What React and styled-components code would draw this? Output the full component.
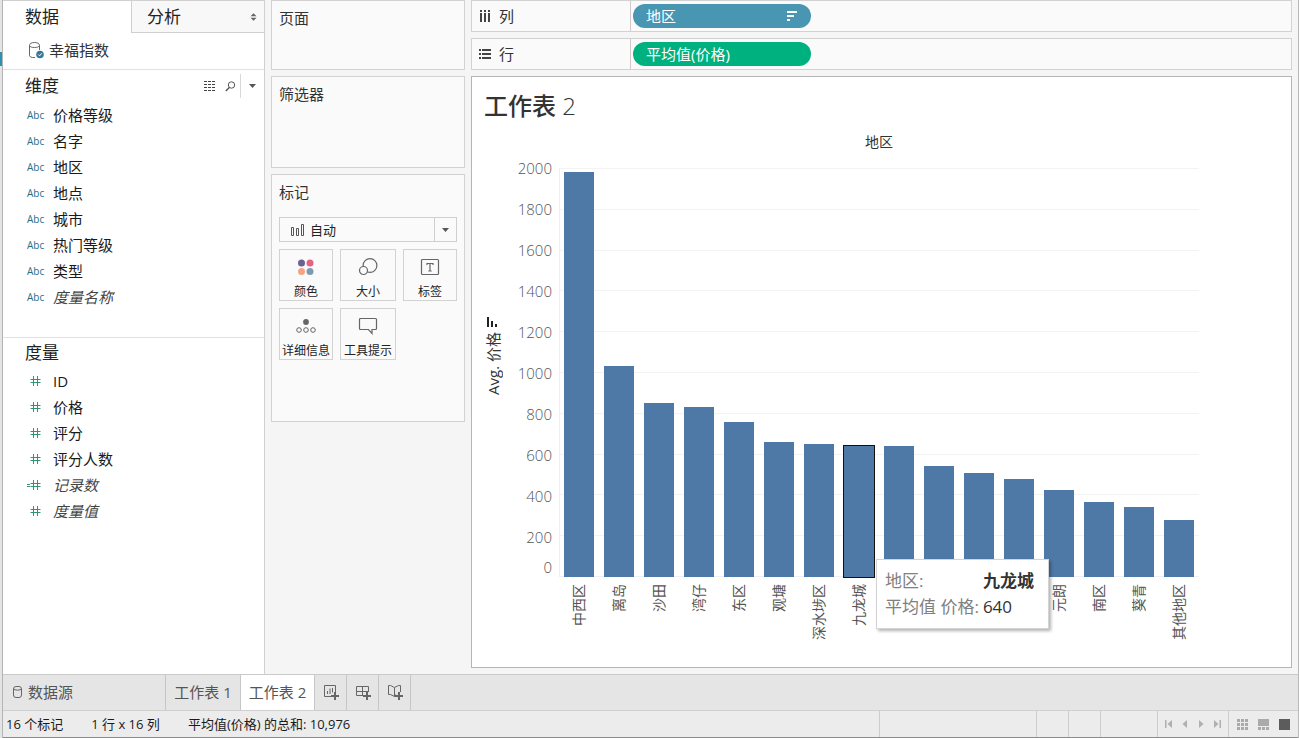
import React from "react";
import styled, { createGlobalStyle } from "styled-components";

const GlobalStyle = createGlobalStyle`
  *, *::before, *::after { box-sizing: border-box; }
  body {
    margin: 0;
    background: #f5f5f5;
    color: #222;
    font: 400 15px/20px "Open Sans", "Noto Sans CJK SC", sans-serif;
  }
  button, select { font: inherit; color: inherit; margin: 0; padding: 0; }
  h2, h1, ul, dl, dd, dt { margin: 0; padding: 0; font-weight: 400; }
  ul { list-style: none; }
  svg { display: block; flex: none; }
`;

const Window = styled.div`
  display: grid;
  grid-template-rows: 1fr auto auto;
  grid-template-columns: 3px 1fr;
  min-height: 100vh;
  border-right: 1px solid #b9b9b9;
`;
const Edge = styled.div`
  grid-row: 1 / 4;
  background: #e4e4e4;
  border-right: 1px solid #b4b4b4;
  padding-top: 52px;
  &::before { content: ""; display: block; height: 14px; background: #2b93ad; }
`;
const Workspace = styled.main`
  display: grid;
  grid-template-columns: 262px 194px 1fr;
  column-gap: 6px;
  padding-right: 6px;
`;

/* Data pane */
const DataPane = styled.aside`
  background: #fff;
  border-right: 1px solid #d0d0d0;
`;
const PaneTabs = styled.div`
  display: grid;
  grid-template-columns: 128px 1fr;
  height: 33px;
  border-top: 1px solid #d0d0d0;
`;
const PaneTab = styled.button`
  display: flex;
  align-items: center;
  justify-content: space-between;
  border: 0;
  padding: 0 7px 0 ${(p) => (p.$active ? 22 : 15)}px;
  font-size: 17px;
  background: ${(p) => (p.$active ? "#fff" : "#f8f8f8")};
  border-left: ${(p) => (p.$active ? 0 : "1px solid #d0d0d0")};
  border-bottom: ${(p) => (p.$active ? 0 : "1px solid #d0d0d0")};
`;
const Source = styled.div`
  display: flex;
  align-items: center;
  gap: 4px;
  height: 37px;
  padding: 0 0 2px 23px;
  color: #333;
  border-bottom: 1px solid #e2e2e2;
`;
const Section = styled.section`
  padding-bottom: 27px;
  border-bottom: ${(p) => (p.$last ? 0 : "1px solid #e2e2e2")};
`;
const SectionHead = styled.header`
  display: flex;
  align-items: center;
  height: ${(p) => (p.$tall ? 32 : 30)}px;
  padding-left: 22px;
`;
const SectionTitle = styled.h2`
  flex: 1;
  font-size: 17px;
`;
const Tool = styled.button`
  display: grid;
  place-items: center;
  height: 24px;
  width: ${(p) => p.$w}px;
  border: 0;
  border-left: ${(p) => (p.$divided ? "1px solid #d8d8d8" : 0)};
  background: none;
`;
const Field = styled.li`
  display: grid;
  grid-template-columns: 26px 1fr;
  align-items: center;
  height: 26px;
  padding-left: 24px;
  color: ${(p) => (p.$italic ? "#444" : "#1a1a1a")};
  font-style: ${(p) => (p.$italic ? "italic" : "normal")};
`;
const Abc = styled.span`
  font: 500 10px/20px "Open Sans", sans-serif;
  color: #22708a;
`;

/* Cards */
const Cards = styled.div`
  display: flex;
  flex-direction: column;
  gap: 6px;
`;
const Card = styled.section`
  height: ${(p) => p.$h}px;
  padding: 7px;
  background: #fafafa;
  border: 1px solid #d2d2d2;
`;
const CardTitle = styled.h2`
  font-size: 15px;
  line-height: 20px;
  color: #333;
`;
const MarkType = styled.label`
  display: grid;
  grid-template-columns: 30px 1fr 22px;
  align-items: center;
  height: 25px;
  margin: 15px 0 7px;
  border: 1px solid #cfcfcf;
  > * { grid-row: 1; }
  > svg { grid-column: 1; justify-self: end; margin-right: 5px; }
`;
const MarkSelect = styled.select`
  grid-column: 1 / 4;
  width: 100%;
  height: 23px;
  padding-left: 30px;
  border: 0;
  background: none;
  appearance: none;
  font-size: 13px;
`;
const SelectArrow = styled.span`
  grid-column: 3;
  display: grid;
  place-items: center;
  height: 23px;
  border-left: 1px solid #cfcfcf;
  pointer-events: none;
`;
const MarkGrid = styled.div`
  display: grid;
  grid-template-columns: 54px 56px 54px;
  gap: 7px;
`;
const MarkButton = styled.button`
  display: flex;
  flex-direction: column;
  align-items: center;
  justify-content: space-between;
  height: 52px;
  padding: 7px 0 0;
  border: 1px solid #d2d2d2;
  background: #fafafa;
  font-size: 12px;
  line-height: 16px;
  white-space: nowrap;
`;

/* Shelves */
const Right = styled.div`
  display: flex;
  flex-direction: column;
  gap: 6px;
  min-width: 0;
  padding-bottom: 6px;
`;
const Shelf = styled.div`
  display: flex;
  align-items: center;
  height: 32px;
  background: #fafafa;
  border: 1px solid #d2d2d2;
`;
const ShelfLabel = styled.div`
  display: flex;
  align-items: center;
  gap: 8px;
  align-self: stretch;
  width: 159px;
  padding-left: 7px;
  margin-right: 2px;
  border-right: 1px solid #d2c8c8;
  color: #333;
`;
const Pill = styled.button`
  display: flex;
  align-items: center;
  justify-content: space-between;
  width: 178px;
  height: 24px;
  padding: 0 13px;
  border: 0;
  border-radius: 12px;
  background: ${(p) => p.$color};
  color: #fff;
`;

/* Worksheet */
const Sheet = styled.section`
  flex: 1;
  background: #fff;
  border: 1px solid #b5b5b5;
`;
const SheetTitle = styled.h1`
  padding: 11px 12px 0;
  font-size: 24px;
  line-height: 36px;
  font-weight: 300;
  color: #333;
  b { font-weight: 500; }
`;
const Chart = styled.div`
  display: grid;
  grid-template-columns: 42px 45px 640px;
  grid-template-rows: 24px 429px auto;
`;
const ChartHeader = styled.div`
  grid-column: 3;
  align-self: end;
  text-align: center;
  font-size: 14px;
  line-height: 12px;
  color: #333;
`;
const AxisTitle = styled.div`
  grid-column: 1;
  grid-row: 2;
  display: flex;
  flex-direction: column;
  align-items: center;
  justify-content: center;
  gap: 4px;
  padding-bottom: 14px;
  color: #333;
  font-size: 15px;
  font-weight: 400;
`;
const Upward = styled.span`
  writing-mode: vertical-rl;
  text-orientation: sideways;
  transform: rotate(180deg);
  white-space: nowrap;
`;
const Ticks = styled.div`
  grid-column: 2;
  grid-row: 2;
  display: grid;
  grid-template-rows: repeat(10, 1fr) 20px;
  align-items: center;
  justify-items: end;
  padding-right: 7px;
  color: #555;
  font-weight: 300;
`;
const Plot = styled.div`
  grid-column: 3;
  grid-row: 2;
  position: relative;
  display: grid;
  padding-top: 20px;
`;
const GridLines = styled.div`
  grid-area: 1 / 1;
  display: grid;
  grid-template-rows: repeat(10, 1fr);
  border-left: 1px solid #f0f0f0;
  border-bottom: 1px solid #f0f0f0;
  > i { border-top: 1px solid #f3f3f3; }
`;
const Bars = styled.div`
  grid-area: 1 / 1;
  display: grid;
  grid-template-columns: repeat(16, 30px);
  column-gap: 10px;
  align-items: end;
  padding-left: 5px;
`;
const Bar = styled.div`
  background: #4e79a7;
  outline: ${(p) => (p.$selected ? "1px solid #111" : "none")};
`;
const Names = styled.div`
  grid-column: 3;
  display: grid;
  grid-template-columns: repeat(16, 40px);
  justify-items: center;
  align-items: start;
  padding-top: 7px;
  color: #555;
  font-size: 14px;
`;
const Tooltip = styled.dl`
  position: absolute;
  left: 317px;
  top: 411px;
  display: grid;
  grid-template-columns: auto auto;
  column-gap: 4px;
  width: 173px;
  height: 70px;
  padding: 8px;
  justify-content: start;
  background: #fff;
  border: 1px solid #d4d4d4;
  box-shadow: 2px 2px 3px rgba(0, 0, 0, 0.3);
  font-size: 17px;
  line-height: 26px;
  white-space: nowrap;
  dt { color: #808080; }
  dd { color: #333; }
  b { font-weight: 700; }
`;

/* Bottom bars */
const SheetTabs = styled.nav`
  grid-column: 2;
  display: flex;
  height: 37px;
  background: #e5e5e5;
  border-top: 1px solid #cacaca;
  border-bottom: 1px solid #cfcfcf;
`;
const SheetTab = styled.button`
  display: flex;
  align-items: center;
  justify-content: ${(p) => (p.$start ? "flex-start" : "center")};
  gap: 6px;
  width: ${(p) => p.$w}px;
  padding: 0 ${(p) => (p.$start ? 10 : 0)}px 2px;
  border: 0;
  border-right: 1px solid #c6c6c6;
  background: ${(p) => (p.$active ? "#fff" : "transparent")};
  color: #555;
`;
const Status = styled.footer`
  grid-column: 2;
  display: flex;
  align-items: center;
  height: 27px;
  padding-left: 3px;
  background: #ececec;
  border-bottom: 1px solid #8a8a8a;
  font-size: 13px;
  color: #1a1a1a;
`;
const StatusText = styled.span`
  margin-right: 28px;
`;
const StatusCell = styled.div`
  display: flex;
  align-items: center;
  justify-content: space-around;
  align-self: stretch;
  width: ${(p) => p.$w}px;
  padding: 0 3px;
  border-left: 1px solid #cdcdcd;
`;
const Spacer = styled.span`
  flex: 1;
`;
const IconButton = styled.button`
  display: grid;
  place-items: center;
  width: 16px;
  height: 18px;
  border: 0;
  background: none;
`;

const Caret = () => (
  <svg width="7" height="4" viewBox="0 0 7 4"><path d="M0 0h7L3.5 4z" fill="#555" /></svg>
);
const SortArrows = () => (
  <svg width="7" height="8" viewBox="0 0 7 8"><path d="M.5 3.3h6L3.5.2zM.5 4.7h6l-3 3.1z" fill="#666" /></svg>
);
const SourceIcon = () => (
  <svg width="19" height="18" viewBox="0 0 19 18" fill="none" stroke="#666">
    <path d="M9 16.500H6.500q-2.500 0-3-2v-10c0-2 2-3 5-3s5 1 5 3V9M3.500 4.500C4 6 6 6.500 8.500 6.500s4.500-.5 5-2" />
    <circle cx="14" cy="13.500" r="3.800" fill="#37789a" stroke="none" />
    <path d="m12.300 13.500 1.300 1.300 2.200-2.500" stroke="#fff" />
  </svg>
);
const GridIcon = () => (
  <svg width="12" height="10" viewBox="0 0 12 10" stroke="#444" strokeDasharray="3 1">
    <path d="M0 .5h12M0 3.500h12M0 6.500h12M0 9.500h12" strokeWidth="1" />
  </svg>
);
const SearchIcon = () => (
  <svg width="11" height="11" viewBox="0 0 11 11" fill="none" stroke="#555">
    <circle cx="6.500" cy="4" r="3.200" /><path d="M4.300 6.500.8 10" strokeWidth="1.400" />
  </svg>
);
const HashIcon = ({ calc }) => (
  <svg width="15" height="12" viewBox="0 0 15 12" stroke="#2f9577" fill="none">
    <path d="M6.500 1v10M10.500 1v10M3.500 4.500h10M3.500 7.500h10" />
    {calc && <path d="M0 5.500h3M0 7.500h3" />}
  </svg>
);
const BarTypeIcon = () => (
  <svg width="14" height="14" viewBox="0 0 14 14" fill="none" stroke="#555">
    <path d="M.5 4.500h2v8h-2zM5.500 5.500h2v7h-2zM10.500 1.500h2v11h-2z" />
  </svg>
);
const ColorIcon = () => (
  <svg width="20" height="20" viewBox="0 0 20 20">
    <circle cx="5.500" cy="6" r="3.500" fill="#6b6294" /><circle cx="14" cy="6" r="3.500" fill="#ea6085" />
    <circle cx="5.500" cy="14.500" r="3.500" fill="#f6a383" /><circle cx="14" cy="14.500" r="3.500" fill="#7b9bb0" />
  </svg>
);
const SizeIcon = () => (
  <svg width="20" height="20" viewBox="0 0 20 20" stroke="#666" strokeWidth="1.200">
    <circle cx="12" cy="8.500" r="6.900" fill="none" /><circle cx="5.500" cy="13.500" r="4" fill="#fafafa" />
  </svg>
);
const LabelIcon = () => (
  <svg width="20" height="20" viewBox="0 0 20 20" fill="none" stroke="#666" strokeWidth="1.200">
    <rect x="1.500" y="2.500" width="17" height="15" rx="1" />
    <path d="M7 8V6.500h6V8M10 6.500v7.500M8.300 14h3.400" />
  </svg>
);
const DetailIcon = () => (
  <svg width="20" height="20" viewBox="0 0 20 20" fill="none" stroke="#666">
    <circle cx="10" cy="6" r="2.900" fill="#666" stroke="none" />
    <circle cx="3" cy="14" r="2.300" /><circle cx="10" cy="14" r="2.300" /><circle cx="17" cy="14" r="2.300" />
  </svg>
);
const TipIcon = () => (
  <svg width="20" height="20" viewBox="0 0 20 20" fill="none" stroke="#666" strokeWidth="1.200">
    <path d="M2.500 2.500h15a1 1 0 0 1 1 1v9a1 1 0 0 1-1 1H14v4l-3.500-4h-8a1 1 0 0 1-1-1v-9a1 1 0 0 1 1-1z" />
  </svg>
);
const ColumnsIcon = () => (
  <svg width="12" height="12" viewBox="0 0 12 12" stroke="#444" strokeWidth="2">
    <path d="M2 0v2M6 0v2M10 0v2M2 3v9M6 3v9M10 3v9" />
  </svg>
);
const RowsIcon = () => (
  <svg width="12" height="12" viewBox="0 0 12 12" stroke="#444" strokeWidth="2">
    <path d="M0 2h2M0 6h2M0 10h2M3 2h9M3 6h9M3 10h9" />
  </svg>
);
const SortIcon = () => (
  <svg width="12" height="10" viewBox="0 0 12 10" stroke="#fff" strokeWidth="2">
    <path d="M1 1h10M1 5h7M1 9h3" />
  </svg>
);
const AxisSortIcon = () => (
  <svg width="14" height="12" viewBox="0 0 14 12" stroke="#222" strokeWidth="2">
    <path d="M2 11V1M6 11V5M10 11V8" />
  </svg>
);
const DbIcon = () => (
  <svg width="9" height="12" viewBox="0 0 9 12" fill="none" stroke="#666">
    <rect x=".5" y=".5" width="8" height="11" rx="2.500" /><path d="M.5 3c1 1.500 7 1.500 8 0" />
  </svg>
);
const NewIcon = ({ kind }) => (
  <svg width="17" height="17" viewBox="0 0 17 17" fill="none" stroke="#666">
    {kind === "sheet" && <path d="M9.500 13.500h-7v-11h11V9M5.500 11V8M8 11V5.500M10.500 9.500V5" />}
    {kind === "board" && <path d="M9.500 12.500h-7v-9h12V9M8.500 3.500v9M2.500 8.500h12" />}
    {kind === "story" && <path d="M9.500 11.500 8.500 13.500l-4-2h-2v-9h2l4 2 4-2h2V9M8.500 4.500v9" />}
    <path d="M13 9v8M9 13h8" strokeWidth="2" />
  </svg>
);
const NavIcon = ({ kind }) => (
  <svg width="8" height="8" viewBox="0 0 8 8" fill="#b0b0b0">
    {kind === "first" && <path d="M0 0h1.500v8H0zM7 0v8L2.500 4z" />}
    {kind === "prev" && <path d="M6 0v8L1.500 4z" />}
    {kind === "next" && <path d="M2 0v8l4.500-4z" />}
    {kind === "last" && <path d="M8 0H6.500v8H8zM1 0v8l4.500-4z" />}
  </svg>
);
const ViewIcon = ({ kind }) => (
  <svg width="11" height="11" viewBox="0 0 11 11" fill="#aaa">
    {kind === "grid" && <path d="M0 0h3v3H0zM4 0h3v3H4zM8 0h3v3H8zM0 4h3v3H0zM4 4h3v3H4zM8 4h3v3H8zM0 8h3v3H0zM4 8h3v3H4zM8 8h3v3H8z" />}
    {kind === "film" && <path d="M0 0h11v7H0zM0 8h3v3H0zM4 8h3v3H4zM8 8h3v3H8z" />}
    {kind === "full" && <path d="M0 0h11v11H0z" fill="#5c5c5c" />}
  </svg>
);

const dimensions = ["价格等级", "名字", "地区", "地点", "城市", "热门等级", "类型", "度量名称"];
const measures = ["ID", "价格", "评分", "评分人数", "记录数", "度量值"];
const ticks = [2000, 1800, 1600, 1400, 1200, 1000, 800, 600, 400, 200, 0];
const regions = [
  ["中西区", 1980], ["离岛", 1032], ["沙田", 851], ["湾仔", 831],
  ["东区", 758], ["观塘", 660], ["深水埗区", 650], ["九龙城", 640],
  ["", 640], ["", 543], ["", 509], ["", 479],
  ["元朗", 425], ["南区", 367], ["葵青", 342], ["其他地区", 279],
];
const marks = [
  ["颜色", ColorIcon], ["大小", SizeIcon], ["标签", LabelIcon],
  ["详细信息", DetailIcon], ["工具提示", TipIcon],
];

export default function App() {
  return (
    <Window>
      <GlobalStyle />
      <Edge />
      <Workspace>
        <DataPane>
          <PaneTabs>
            <PaneTab $active>数据</PaneTab>
            <PaneTab>分析<SortArrows /></PaneTab>
          </PaneTabs>
          <Source><SourceIcon />幸福指数</Source>
          <Section>
            <SectionHead $tall>
              <SectionTitle>维度</SectionTitle>
              <Tool $w={20} aria-label="网格"><GridIcon /></Tool>
              <Tool $w={20} aria-label="搜索"><SearchIcon /></Tool>
              <Tool $w={24} $divided aria-label="菜单"><Caret /></Tool>
            </SectionHead>
            <ul>
              {dimensions.map((d) => (
                <Field key={d} $italic={d === "度量名称"}><Abc>Abc</Abc>{d}</Field>
              ))}
            </ul>
          </Section>
          <Section $last>
            <SectionHead><SectionTitle>度量</SectionTitle></SectionHead>
            <ul>
              {measures.map((m) => (
                <Field key={m} $italic={m === "记录数" || m === "度量值"}>
                  <HashIcon calc={m === "记录数"} />{m}
                </Field>
              ))}
            </ul>
          </Section>
        </DataPane>

        <Cards>
          <Card $h={70}><CardTitle>页面</CardTitle></Card>
          <Card $h={92}><CardTitle>筛选器</CardTitle></Card>
          <Card $h={248}>
            <CardTitle>标记</CardTitle>
            <MarkType>
              <BarTypeIcon />
              <MarkSelect aria-label="标记类型"><option>自动</option></MarkSelect>
              <SelectArrow><Caret /></SelectArrow>
            </MarkType>
            <MarkGrid>
              {marks.map(([name, Icon]) => (
                <MarkButton key={name}><Icon />{name}</MarkButton>
              ))}
            </MarkGrid>
          </Card>
        </Cards>

        <Right>
          <Shelf>
            <ShelfLabel><ColumnsIcon />列</ShelfLabel>
            <Pill $color="#4996b2">地区<SortIcon /></Pill>
          </Shelf>
          <Shelf>
            <ShelfLabel><RowsIcon />行</ShelfLabel>
            <Pill $color="#00b180">平均值(价格)</Pill>
          </Shelf>
          <Sheet>
            <SheetTitle><b>工作表</b> 2</SheetTitle>
            <Chart>
              <ChartHeader>地区</ChartHeader>
              <AxisTitle><AxisSortIcon /><Upward>Avg. 价格</Upward></AxisTitle>
              <Ticks>{ticks.map((t) => <span key={t}>{t}</span>)}</Ticks>
              <Plot>
                <GridLines>{ticks.slice(1).map((t) => <i key={t} />)}</GridLines>
                <Bars>
                  {regions.map(([name, value], i) => (
                    <Bar key={i} $selected={name === "九龙城"} style={{ height: `${value / 20}%` }} />
                  ))}
                </Bars>
                <Tooltip>
                  <dt>地区:</dt><dd><b>九龙城</b></dd>
                  <dt>平均值 价格:</dt><dd>640</dd>
                </Tooltip>
              </Plot>
              <Names>{regions.map(([name], i) => <Upward key={i}>{name}</Upward>)}</Names>
            </Chart>
          </Sheet>
        </Right>
      </Workspace>

      <SheetTabs>
        <SheetTab $w={163} $start><DbIcon />数据源</SheetTab>
        <SheetTab $w={75}>工作表 1</SheetTab>
        <SheetTab $w={74} $active>工作表 2</SheetTab>
        <SheetTab $w={32} aria-label="新建工作表"><NewIcon kind="sheet" /></SheetTab>
        <SheetTab $w={32} aria-label="新建仪表板"><NewIcon kind="board" /></SheetTab>
        <SheetTab $w={32} aria-label="新建故事"><NewIcon kind="story" /></SheetTab>
      </SheetTabs>
      <Status>
        <StatusText>16 个标记</StatusText>
        <StatusText>1 行 x 16 列</StatusText>
        <StatusText>平均值(价格) 的总和: 10,976</StatusText>
        <Spacer />
        <StatusCell $w={157} />
        <StatusCell $w={32} />
        <StatusCell $w={32} />
        <StatusCell $w={57} />
        <StatusCell $w={71}>
          {["first", "prev", "next", "last"].map((k) => (
            <IconButton key={k} aria-label={k}><NavIcon kind={k} /></IconButton>
          ))}
        </StatusCell>
        <StatusCell $w={70}>
          {["grid", "film", "full"].map((k) => (
            <IconButton key={k} aria-label={k}><ViewIcon kind={k} /></IconButton>
          ))}
        </StatusCell>
      </Status>
    </Window>
  );
}
